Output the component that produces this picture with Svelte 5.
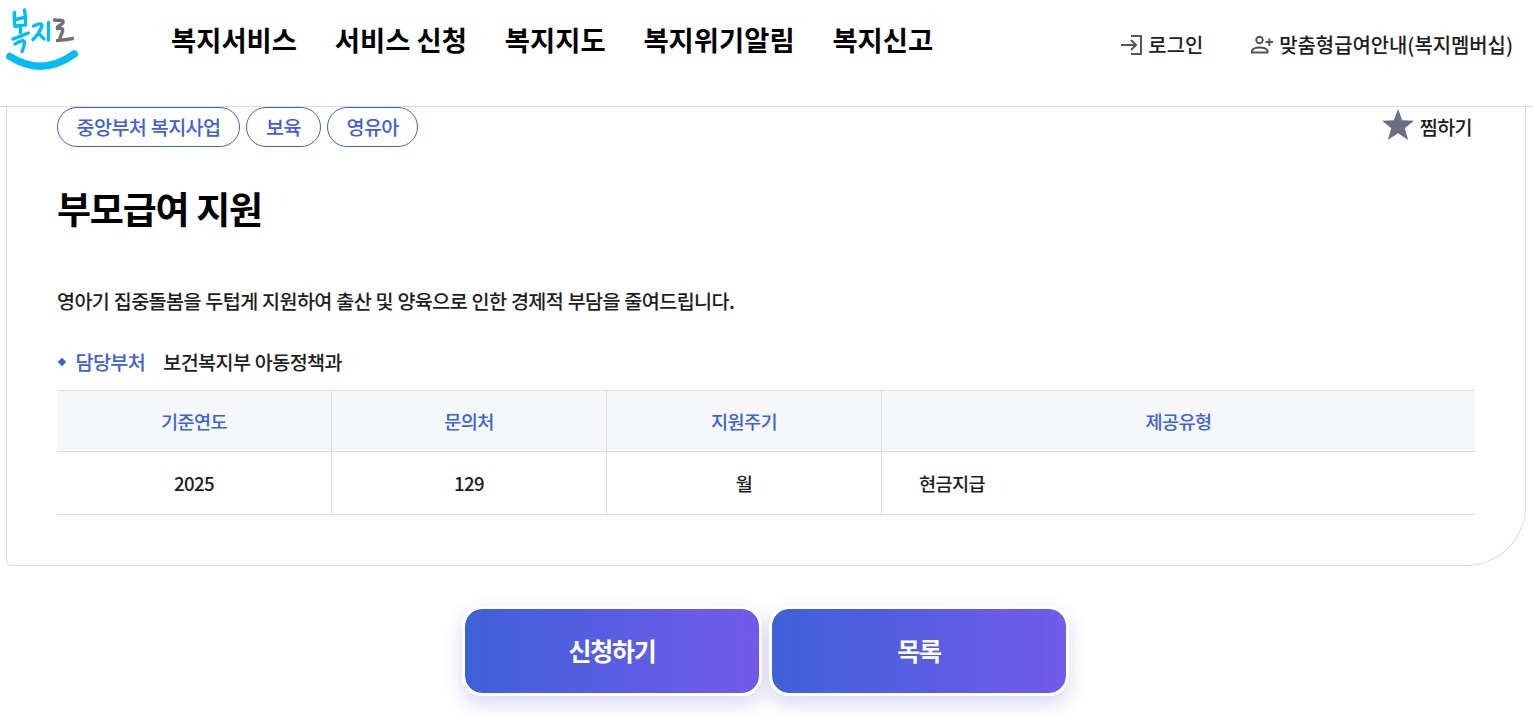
<script>
	const menus = ['복지서비스', '서비스 신청', '복지지도', '복지위기알림', '복지신고'];

	const service = {
		tags: ['중앙부처 복지사업', '보육', '영유아'],
		title: '부모급여 지원',
		summary: '영아기 집중돌봄을 두텁게 지원하여 출산 및 양육으로 인한 경제적 부담을 줄여드립니다.',
		department: '보건복지부 아동정책과'
	};

	const columns = ['기준연도', '문의처', '지원주기', '제공유형'];
	const values = ['2025', '129', '월', '현금지급'];

	let saved = $state(false);
</script>

<header class="header">
	<a class="logo" href="#home" aria-label="복지로">
		<svg width="74" height="64" viewBox="0 0 74 64" fill="none" stroke-linecap="round" stroke-linejoin="round">
			<g stroke="#00bdf2" stroke-width="3.4">
				<path d="M8.5 5.5 C8 11 8 15 9 19.5 M18.5 3 C19.5 8 20 13 19.5 18 M9 12.5 L18.5 10.5 M9 19.5 L19.5 17.5" />
				<path d="M14.5 20 V25.5 M7 32 C12 30.5 17 28 22.5 26" />
				<path d="M9 37 C13 35 18 32 18.5 35 C18.5 39 17 42 16 44.5" />
				<path d="M27.5 19 C31 17.5 37 15 36 19 C34 24 31 29 27 32.5 M32.5 25.5 C34 28 36 30.5 38 32" />
				<path d="M42.5 15.5 V33" />
			</g>
			<path d="M48.5 13 C52 14 58 12 57 15.5 C55.5 19 50 19 51.5 21.5 C59 20 57 24 54 31 M51.5 33.5 C56 33 61 32.5 66.5 31.5" stroke="#6f7078" stroke-width="3.4" />
			<path d="M3.8 49.5 Q36 70 68.2 47" stroke="#00bdf2" stroke-width="7.4" />
		</svg>
	</a>
	<nav class="menu">
		{#each menus as menu}
			<a href="#menu">{menu}</a>
		{/each}
	</nav>
	<div class="util">
		<a class="login" href="#login">
			<svg width="22" height="22" viewBox="0 0 22 22" fill="none" stroke="#555" stroke-width="2">
				<path d="M10 2 H20 V20 H10 M0 11 H15 M10 6 L15 11 L10 16" />
			</svg>
			로그인
		</a>
		<a class="member" href="#member">
			<svg width="24" height="20" viewBox="0 0 24 20" fill="none" stroke="#555" stroke-width="2">
				<circle cx="9.5" cy="5" r="3.2" />
				<path d="M2 17.5 V15.5 C4 11.5 15 11.5 17.5 15.5 V17.5 Z M15.5 7 H23 M19.3 3.5 V11" />
			</svg>
			맞춤형급여안내(복지멤버십)
		</a>
	</div>
</header>

<main>
	<section class="card">
		<div class="card-top">
			<ul class="tags">
				{#each service.tags as tag}
					<li>{tag}</li>
				{/each}
			</ul>
			<button class="save" type="button" aria-pressed={saved} onclick={() => (saved = !saved)}>
				<svg width="32" height="31" viewBox="0 0 32 31" fill="#6b6e85">
					<path d="M16 0 L20.2 11.3 L32 11.8 L22.7 19.2 L26.2 31 L16 24.2 L5.8 31 L9.3 19.2 L0 11.8 L11.8 11.3 Z" />
				</svg>
				찜하기
			</button>
		</div>

		<h1>{service.title}</h1>
		<p class="summary">{service.summary}</p>

		<dl class="department">
			<dt>담당부처</dt>
			<dd>{service.department}</dd>
		</dl>

		<table>
			<thead>
				<tr>
					{#each columns as column}
						<th scope="col">{column}</th>
					{/each}
				</tr>
			</thead>
			<tbody>
				<tr>
					{#each values as value}
						<td>{value}</td>
					{/each}
				</tr>
			</tbody>
		</table>
	</section>

	<div class="actions">
		<button type="button">신청하기</button>
		<button type="button">목록</button>
	</div>
</main>

<style>
	:global(body) {
		margin: 0;
		background: #fff;
		overflow: hidden;
	}

	:global(#app) {
		height: 715px;
		overflow: hidden;
		font-family: 'Noto Sans CJK KR', 'Noto Sans', sans-serif;
		font-size: 19.6px;
		font-weight: 500;
		letter-spacing: -0.6px;
		word-spacing: 0.65px;
		color: #1d1d1d;
	}

	a {
		color: inherit;
		text-decoration: none;
	}

	button {
		font: inherit;
		letter-spacing: inherit;
		color: inherit;
		cursor: pointer;
	}

	svg {
		display: block;
		flex: none;
	}

	.header {
		display: flex;
		align-items: flex-start;
		box-sizing: border-box;
		height: 107px;
		padding: 7px 20px 0 6px;
		border-bottom: 1px solid #ddd;
	}

	.menu {
		display: flex;
		gap: 37.8px;
		margin: 12px 0 0 91px;
		font-size: 27.4px;
		font-weight: 700;
		line-height: 40px;
		letter-spacing: 0;
		word-spacing: 0;
		color: #000;
	}

	.util {
		display: flex;
		gap: 47px;
		margin: 22px 0 0 auto;
		font-size: 19.9px;
		line-height: 30px;
		letter-spacing: 0;
	}

	.util a {
		display: flex;
		align-items: center;
		gap: 5px;
	}

	.util .member {
		padding-top: 1px;
	}

	.card {
		box-sizing: border-box;
		height: 459px;
		margin: 0 7px 0 6px;
		padding: 0 50px;
		border: 1px solid #ddd;
		border-top: 0;
		border-radius: 0 0 60px 6px;
	}

	.card-top {
		display: flex;
		justify-content: space-between;
	}

	.tags {
		display: flex;
		gap: 6.4px;
		margin: 0;
		padding: 0;
		list-style: none;
	}

	.tags li {
		box-sizing: border-box;
		height: 40px;
		padding: 0 18.6px;
		border: 1px solid #3e61d7;
		border-radius: 20px;
		line-height: 38px;
		color: #3e61d7;
	}

	.save {
		display: flex;
		align-items: center;
		gap: 6px;
		height: 38px;
		margin-right: 3px;
		padding: 0;
		border: 0;
		background: none;
	}

	.save svg {
		margin-bottom: 3px;
	}

	h1 {
		margin: 34px 0 0;
		font-size: 37px;
		line-height: 54px;
		letter-spacing: -1.2px;
		color: #000;
	}

	.summary {
		margin: 51px 0 0;
		line-height: 30px;
	}

	.department {
		display: flex;
		align-items: center;
		margin: 31px 0 13px;
		line-height: 30px;
	}

	dt {
		display: flex;
		align-items: center;
		color: #3e61d7;
	}

	dt::before {
		width: 6px;
		height: 6px;
		margin: 0 10.5px 0 2px;
		background: #3e61d7;
		content: '';
		transform: rotate(45deg);
	}

	dd {
		margin: 0 0 0 18px;
	}

	table {
		width: 100%;
		border-collapse: separate;
		border-spacing: 0;
		border-top: 1px solid #ddd;
		font-size: 18.6px;
		table-layout: fixed;
	}

	th,
	td {
		box-sizing: border-box;
		width: 275px;
		padding: 0 0 1px;
		border-right: 1px solid #ddd;
		border-bottom: 1px solid #ddd;
		text-align: center;
		font-weight: 500;
	}

	th {
		height: 61px;
		background: #f5f7fb;
		color: #3e61d7;
	}

	td {
		height: 63px;
	}

	th:last-child,
	td:last-child {
		width: auto;
		border-right: 0;
	}

	td:last-child {
		padding-left: 37px;
		text-align: left;
	}

	.actions {
		display: flex;
		justify-content: center;
		gap: 7px;
		padding: 40px 2px 19px 0;
	}

	.actions button {
		box-sizing: border-box;
		width: 300px;
		height: 90px;
		padding: 0 0 3px;
		border: 3px solid #fff;
		border-radius: 20px;
		background: linear-gradient(90deg, #3e61d7, #735aec) padding-box;
		box-shadow: 0 8px 20px rgba(62, 55, 180, 0.2);
		font-size: 25px;
		font-weight: 700;
		letter-spacing: -1.2px;
		color: #fff;
	}
</style>
